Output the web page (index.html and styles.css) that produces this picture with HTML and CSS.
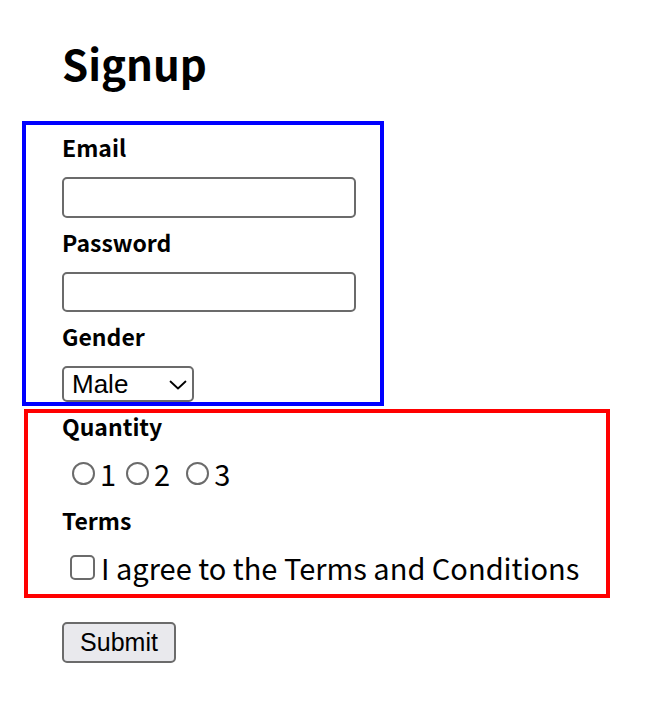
FILE: index.html
```html
<!DOCTYPE html>
<html lang="en">
<head>
<meta charset="utf-8">
<title>Signup</title>
<link rel="stylesheet" href="styles.css">
</head>
<body>
<h1 class="title">Signup</h1>
<form class="form">
  <div class="box box-blue">
    <label class="field-label" for="email">Email</label>
    <input class="text-input" id="email" type="email">
    <label class="field-label" for="password">Password</label>
    <input class="text-input" id="password" type="password">
    <label class="field-label" for="gender">Gender</label>
    <div class="select-wrap">
      <select class="select" id="gender">
        <option>Male</option>
        <option>Female</option>
      </select>
      <svg class="chevron" width="18" height="10" viewBox="0 0 18 10" aria-hidden="true"><path d="M1.5 1.5 L9 8.5 L16.5 1.5" fill="none" stroke="#000" stroke-width="1.8" stroke-linecap="round" stroke-linejoin="round"/></svg>
    </div>
  </div>
  <div class="box box-red">
    <div class="field-label">Quantity</div>
    <div class="radio-row">
      <label class="opt"><input class="radio" type="radio" name="qty">1</label>
      <label class="opt"><input class="radio" type="radio" name="qty">2</label>
      <label class="opt"><input class="radio" type="radio" name="qty">3</label>
    </div>
    <div class="field-label">Terms</div>
    <label class="check-row"><input class="checkbox" type="checkbox">I agree to the Terms and Conditions</label>
  </div>
  <button class="submit" type="submit">Submit</button>
</form>
</body>
</html>
```
FILE: styles.css
```css
html, body {
  margin: 0;
  padding: 0;
  background: #fff;
  color: #000;
}
body {
  font-family: "Noto Sans CJK KR", "Noto Sans", sans-serif;
}
.title {
  margin: 0;
  padding: 35px 0 0 62px;
  height: 87px;
  box-sizing: border-box;
  font-size: 42px;
  line-height: 56px;
  font-weight: 700;
}
.form {
  display: flex;
  flex-direction: column;
  align-items: flex-start;
  padding-top: 34px;
}
.box {
  box-sizing: border-box;
  border: 4px solid;
  display: flex;
  flex-direction: column;
  align-items: flex-start;
}
.box-blue {
  border-color: #0000ff;
  margin-left: 22px;
  width: 362px;
  height: 285px;
  padding: 10px 0 0 36px;
}
.box-red {
  border-color: #ff0000;
  margin-left: 24px;
  margin-top: 3px;
  width: 586px;
  height: 189px;
  padding: 1px 0 0 34px;
}
.field-label {
  font-size: 23px;
  font-weight: 700;
  line-height: 24px;
  height: 24px;
}
.box-blue .field-label {
  margin-bottom: 18px;
}
.text-input {
  box-sizing: border-box;
  width: 294px;
  height: 41px;
  margin: 0 0 12px 0;
  border: 2px solid #6b6b6b;
  border-radius: 5px;
  padding: 0 6px;
  font-size: 24px;
}
.select-wrap {
  position: relative;
  width: 132px;
  height: 36px;
}
.select {
  appearance: none;
  -webkit-appearance: none;
  box-sizing: border-box;
  width: 132px;
  height: 36px;
  margin: 0;
  padding: 0 0 0 8px;
  border: 2px solid #6b6b6b;
  border-radius: 5px;
  background: #fff;
  font-family: "Liberation Sans", Arial, sans-serif;
  font-size: 26px;
  line-height: 32px;
  color: #000;
}
.chevron {
  position: absolute;
  left: 107px;
  top: 14px;
  pointer-events: none;
}
.radio-row {
  display: flex;
  align-items: center;
  height: 30px;
  margin-top: 20px;
  margin-bottom: 20px;
  font-size: 29px;
  line-height: 30px;
}
.opt {
  display: flex;
  align-items: center;
}
.radio {
  appearance: none;
  -webkit-appearance: none;
  box-sizing: border-box;
  width: 23px;
  height: 23px;
  margin: 0 5px 0 10px;
  border: 2px solid #6b6b6b;
  border-radius: 50%;
  background: #fff;
}
.opt:last-child .radio {
  margin-left: 16px;
}
.check-row {
  display: flex;
  align-items: center;
  height: 30px;
  margin-top: 20px;
  font-size: 29px;
  line-height: 30px;
}
.checkbox {
  appearance: none;
  -webkit-appearance: none;
  box-sizing: border-box;
  width: 25px;
  height: 25px;
  margin: 0 6px 0 8px;
  border: 2px solid #6b6b6b;
  border-radius: 5px;
  background: #fff;
}
.submit {
  box-sizing: border-box;
  margin: 24px 0 0 62px;
  width: 114px;
  height: 41px;
  padding: 0;
  border: 2px solid #6b6b6b;
  border-radius: 5px;
  background: #e9e9ed;
  font-family: "Liberation Sans", Arial, sans-serif;
  font-size: 25px;
  color: #000;
}
```
